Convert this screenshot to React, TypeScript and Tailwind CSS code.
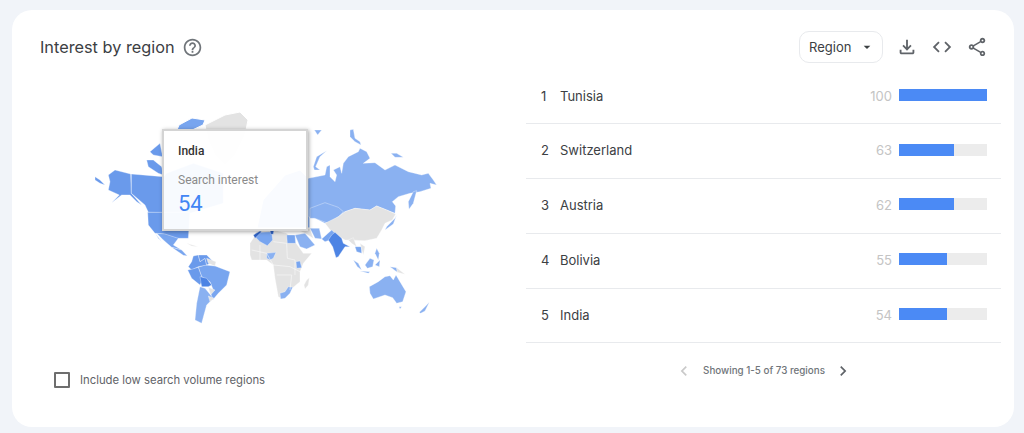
import { MdArrowDropDown, MdChevronLeft, MdChevronRight, MdCode, MdHelpOutline, MdOutlineFileDownload, MdOutlineShare } from "react-icons/md";

const rows = [
  { rank: 1, name: "Tunisia", value: 100 },
  { rank: 2, name: "Switzerland", value: 63 },
  { rank: 3, name: "Austria", value: 62 },
  { rank: 4, name: "Bolivia", value: 55 },
  { rank: 5, name: "India", value: 54 },
];

const LIGHT = "#8ab1f1";
const MID = "#78a5ef";
const DARK = "#6a9aeb";
const DEEP = "#4d84e4";
const NAVY = "#2f62c4";
const GRAY = "#e3e3e3";

type Shape = [string, string];

// traced by hand, each group in its own 3x crop of the map
const behindTooltip: Shape[] = [
  [GRAY, "205,125 225,115 240,112 248,120 245,135 235,155 225,165 215,155 208,140"],
  [MID, "179,125 192,118 205,120 203,125 190,131 177,130"],
  [LIGHT, "257,228 263,200 285,175 300,170 310,180 310,228"],
];

const americas: Shape[] = [
  [DARK, "15,140 30,150 45,165 30,160 15,150"],
  [DARK, "55,135 75,120 122,132 124,190 155,225 140,215 120,195 95,195 65,218 88,195 55,180 60,155"],
  [DARK, "124,132 220,140 230,130 310,100 400,130 400,220 300,250 175,247 165,225 124,190"],
  [DARK, "170,90 190,90 215,110 220,135 205,130 175,110"],
  [DARK, "180,65 210,40 218,80 190,75"],
  [DARK, "173,247 300,247 295,325 260,325 220,312 195,310 175,285"],
  [MID, "200,310 225,312 265,325 250,345 275,360 245,352 220,330"],
  [MID, "197,312 215,335 205,325"],
  [MID, "245,352 275,360 292,378 280,376"],
  [GRAY, "290,340 325,350 305,348"],
  [MID, "345,405 375,408 420,425 410,465 385,490 368,510 362,490 370,480 360,455 335,440 325,412"],
  [DARK, "310,378 325,375 330,395 345,385 350,405 325,410 305,420 295,410 305,395"],
  [DARK, "325,375 350,375 370,395 350,405 345,385 330,395"],
  [GRAY, "350,385 378,395 375,408 355,400"],
  [DARK, "293,420 305,418 325,412 335,440 340,445 330,465 305,445"],
  [DEEP, "330,440 350,445 365,465 355,470 335,470"],
  [LIGHT, "330,470 345,475 370,505 350,525 335,580 315,570 320,520"],
  [GRAY, "355,472 375,480 362,495"],
  [GRAY, "355,498 372,505 360,515"],
];

const russia: Shape[] = [
  [LIGHT, "10,175 60,165 65,140 75,135 75,170 90,185 95,165 85,150 105,140 110,160 115,130 130,110 160,95 165,85 185,95 195,115 175,130 210,128 240,150 270,135 310,155 350,165 370,160 385,180 395,195 375,190 378,205 345,215 315,220 280,230 262,245 272,258 270,280 245,270 215,258 195,270 150,265 120,275 100,290 60,310 30,295 10,290"],
  [LIGHT, "25,140 35,110 65,92 45,110 32,140 45,150 28,150"],
  [LIGHT, "135,30 145,28 150,55 165,65 168,75 150,65 135,50"],
  [LIGHT, "258,100 275,100 295,112 270,112"],
  [LIGHT, "28,30 50,30 38,45"],
  [LIGHT, "15,265 60,248 100,262 115,275 100,290 70,310 30,295 15,295"],
  [GRAY, "100,290 120,275 150,265 195,270 215,258 245,270 272,282 262,300 240,310 230,330 215,355 180,362 120,360 80,335 60,310"],
  [LIGHT, "245,320 270,295 275,285 265,312 240,330"],
  [LIGHT, "325,215 335,212 325,250 312,268 310,245"],
];

const southern: Shape[] = [
  [GRAY, "0,55 10,40 20,20 70,15 110,25 135,50 160,85 185,85 160,115 150,140 150,170 120,195 95,220 85,215 75,160 70,120 50,105 5,105 0,90"],
  [MID, "15,35 30,22 65,20 68,45 52,62 30,50"],
  [NAVY, "10,30 30,18 35,20 15,40"],
  [NAVY, "60,15 72,15 70,28 62,28"],
  [MID, "110,30 135,30 137,55 112,55"],
  [LIGHT, "50,85 78,82 70,100 60,105 50,100"],
  [MID, "138,110 150,108 155,128 140,130"],
  [LIGHT, "90,205 105,200 115,185 128,187 120,205 105,220 92,222"],
  [GRAY, "170,165 178,158 175,180 165,192 162,180"],
  [GRAY, "150,18 180,10 190,40 165,25"],
  [LIGHT, "135,30 165,25 195,60 170,72 150,65"],
  [LIGHT, "180,10 208,10 215,42 195,40"],
  [MID, "215,42 245,15 255,25 240,45 225,50"],
  [DEEP, "235,45 245,30 255,22 275,40 280,55 300,65 285,65 265,95 258,98 248,65"],
  [GRAY, "295,45 310,38 320,65 305,55"],
  [MID, "315,65 335,65 335,85 320,80"],
  [GRAY, "330,55 345,65 340,90"],
  [LIGHT, "310,105 325,115 335,135 322,125"],
  [LIGHT, "345,120 360,100 372,105 368,125 352,130"],
  [LIGHT, "330,138 360,140 355,145"],
  [LIGHT, "380,70 388,85 385,105 375,85"],
  [LIGHT, "375,120 390,105 388,125"],
  [LIGHT, "420,125 440,128 442,142"],
  [GRAY, "440,128 465,148 442,142"],
  [LIGHT, "358,185 385,170 405,155 420,152 430,165 438,150 450,170 468,200 458,230 440,235 428,218 405,210 370,222 360,205"],
  [LIGHT, "447,245 455,245 450,252"],
  [LIGHT, "508,262 525,245 538,232 525,258 512,265"],
];

// country borders inside the gray part of africa
const africaBorders = [
  "70,50 110,55 112,100 135,105 135,150",
  "5,75 50,85 70,120 120,125 150,140",
  "80,150 125,150 120,195",
  "30,60 30,105",
];

function Polys({ shapes }: { shapes: Shape[] }) {
  return (
    <>
      {shapes.map(([fill, points], i) => (
        <polygon key={i} points={points} fill={fill} stroke="#ffffff" strokeWidth="1" strokeLinejoin="round" />
      ))}
    </>
  );
}

function WorldMap() {
  return (
    <svg viewBox="60 90 400 250" className="block h-[250px] w-[400px]">
      <Polys shapes={behindTooltip} />
      <g transform="translate(90 130) scale(0.3333)">
        <Polys shapes={americas} />
      </g>
      <g transform="translate(305 120) scale(0.3333)">
        <Polys shapes={russia} />
      </g>
      <g transform="translate(250 225) scale(0.3333)">
        <Polys shapes={southern} />
        {africaBorders.map((points) => (
          <polyline key={points} points={points} fill="none" stroke="#ffffff" strokeWidth="1.5" />
        ))}
      </g>
    </svg>
  );
}

export default function App() {
  return (
    <div className="h-[433px] w-[1024px] overflow-hidden bg-[#f1f4f9] pl-3 pt-[10px] font-['Inter','Liberation_Sans',sans-serif]">
      <div className="flex h-[417px] w-[1002px] flex-col rounded-[20px] bg-white">
        <div className="flex h-[58px] items-start justify-between pl-7 pr-[26px] pt-[21px]">
          <div className="flex h-8 items-center gap-[7px]">
            <h2 className="text-[16.3px] font-normal text-[#3c4043]">Interest by region</h2>
            <MdHelpOutline className="text-[21px] text-[#70757a]" />
          </div>
          <div className="flex items-center">
            <button className="flex h-8 w-[84px] items-center rounded-[10px] border border-[#e8eaed] pl-[9px] text-[13px] text-[#3c4043]">
              <span className="pt-px">Region</span>
              <MdArrowDropDown className="ml-2 text-base" />
            </button>
            <MdOutlineFileDownload className="ml-[13px] text-[22px] text-[#5f6368]" />
            <MdCode className="ml-[13px] text-[22px] text-[#5f6368]" />
            <MdOutlineShare className="ml-[13px] text-[22px] text-[#5f6368]" />
          </div>
        </div>
        <div className="flex flex-1">
          <div className="relative flex w-[514px] flex-col pl-[48px] pt-[22px]">
            <WorldMap />
            <div className="absolute left-[150px] top-[61px] h-[102px] w-[146px] border-2 border-[#d4d4d4] bg-white/95 pl-[14px] pt-3 font-['Roboto',sans-serif] shadow-[1px_1px_4px_rgba(0,0,0,0.35)]">
              <div className="text-xs font-medium text-[#333333]">India</div>
              <div className="mt-[13px] text-xs text-[#8a8a8a]">Search interest</div>
              <div className="mt-1 text-[22px] leading-6 text-[#4285f4]">54</div>
            </div>
            <label className="-ml-[6px] mt-[31px] flex items-center gap-[10px] text-[11.3px] text-[#5f6368]">
              <span className="h-4 w-4 rounded-[1px] border-2 border-[#6e6e6e]" />
              <span className="pt-px">Include low search volume regions</span>
            </label>
          </div>
          <div className="mt-[1.5px] flex w-[475px] flex-col">
            {rows.map((row) => (
              <div key={row.rank} className="flex h-[54.8px] items-center border-b border-[#e8eaed]">
                <span className="ml-[15px] w-[19px] text-[13px] text-[#3c4043]">{row.rank}</span>
                <span className="flex-1 text-[13px] text-[#3c4043]">{row.name}</span>
                <span className="text-[13px] text-[#c4c4c4]">{row.value}</span>
                <div className="mb-[3px] ml-[7px] mr-[14px] h-3 w-[88px] bg-[#ececec]">
                  <div className="h-full bg-[#4b8af5]" style={{ width: `${row.value}%` }} />
                </div>
              </div>
            ))}
            <div className="mt-[17.5px] flex items-center justify-center text-[9.8px] font-medium text-[#70757a]">
              <MdChevronLeft className="mr-[1px] text-xl text-[#c9c9c9]" />
              <span className="mx-[8px]">Showing 1-5 of 73 regions</span>
              <MdChevronRight className="text-xl text-[#5f6368]" />
            </div>
          </div>
        </div>
      </div>
    </div>
  );
}
